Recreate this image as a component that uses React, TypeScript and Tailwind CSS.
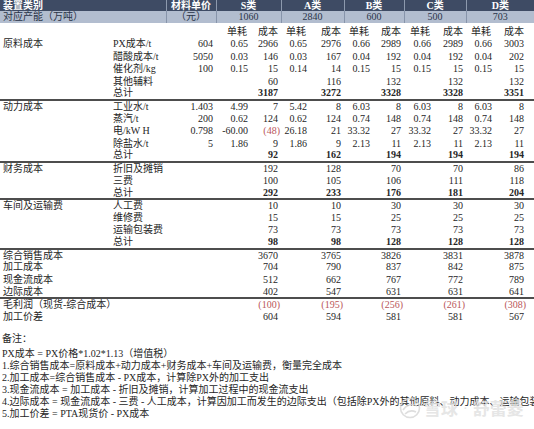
const colClass = [
  "w-[110px]",
  "w-[56px]",
  "w-[50px]",
  "w-[35px]",
  "w-[30px]",
  "w-[29px]",
  "w-[34px]",
  "w-[29px]",
  "w-[31px]",
  "w-[30px]",
  "w-[32px]",
  "w-[29px]",
  "w-[32px]",
  "w-[7px]",
];

interface Row {
  label?: string;
  sub?: string;
  unit?: string;
  vals: string[]; // S单耗, S成本, A单耗, A成本 ... D成本
  bold?: boolean;
  line?: boolean;
  red?: number[];
}

// only the 成本 columns filled
const cost = (a: string, b: string, c: string, d: string, e: string) => ["", a, "", b, "", c, "", d, "", e];

const rows: Row[] = [
  { label: "原料成本", sub: "PX成本/t", unit: "604", vals: ["0.65", "2966", "0.65", "2976", "0.66", "2989", "0.66", "2989", "0.66", "3003"] },
  { sub: "醋酸成本/t", unit: "5050", vals: ["0.03", "146", "0.03", "167", "0.04", "192", "0.04", "192", "0.04", "202"] },
  { sub: "催化剂/kg", unit: "100", vals: ["0.15", "15", "0.14", "14", "0.15", "15", "0.15", "15", "0.15", "15"] },
  { sub: "其他辅料", vals: cost("60", "116", "132", "132", "132") },
  { sub: "总计", vals: cost("3187", "3272", "3328", "3328", "3351"), bold: true, line: true },
  { label: "动力成本", sub: "工业水/t", unit: "1.403", vals: ["4.99", "7", "5.42", "8", "6.03", "8", "6.03", "8", "6.03", "8"] },
  { sub: "蒸汽/t", unit: "200", vals: ["0.62", "124", "0.62", "124", "0.74", "148", "0.74", "148", "0.74", "148"] },
  { sub: "电/kW H", unit: "0.798", vals: ["-60.00", "(48)", "26.18", "21", "33.32", "27", "33.32", "27", "33.32", "27"], red: [1] },
  { sub: "除盐水/t", unit: "5", vals: ["1.86", "9", "1.86", "9", "2.13", "11", "2.13", "11", "2.13", "11"] },
  { sub: "总计", vals: cost("92", "162", "194", "194", "194"), bold: true, line: true },
  { label: "财务成本", sub: "折旧及摊销", vals: cost("192", "128", "70", "70", "86") },
  { sub: "三费", vals: cost("100", "105", "106", "111", "118") },
  { sub: "总计", vals: cost("292", "233", "176", "181", "204"), bold: true, line: true },
  { label: "车间及运输费", sub: "人工费", vals: cost("10", "10", "30", "30", "30") },
  { sub: "维修费", vals: cost("15", "15", "25", "25", "25") },
  { sub: "运输包装费", vals: cost("73", "73", "73", "73", "73") },
  { sub: "总计", vals: cost("98", "98", "128", "128", "128"), bold: true, line: true },
  { label: "综合销售成本", vals: cost("3670", "3765", "3826", "3831", "3878") },
  { label: "加工成本", vals: cost("704", "790", "837", "842", "875") },
  { label: "现金流成本", vals: cost("512", "662", "767", "772", "789") },
  { label: "边际成本", vals: cost("402", "547", "631", "631", "641"), line: true },
  { label: "毛利润（现货-综合成本）", vals: cost("(100)", "(195)", "(256)", "(261)", "(308)"), red: [1, 3, 5, 7, 9] },
  { label: "加工价差", vals: cost("604", "594", "581", "581", "567") },
];

const notes = [
  "PX成本 = PX价格*1.02*1.13（增值税）",
  "1.综合销售成本=原料成本+动力成本+财务成本+车间及运输费，衡量完全成本",
  "2.加工成本=综合销售成本 - PX成本，计算除PX外的加工支出",
  "3.现金流成本 = 加工成本 - 折旧及摊销，计算加工过程中的现金流支出",
  "4.边际成本 = 现金流成本 - 三费 - 人工成本，计算因加工而发生的边际支出（包括除PX外的其他原料、动力成本、运输包装费）",
  "5.加工价差 = PTA现货价 - PX成本",
];

const classes = ["S", "A", "B", "C", "D"];
const capacity = ["1060", "2840", "600", "500", "703"];

export default function App() {
  return (
    <div className="relative w-[534px] h-[429px] overflow-hidden bg-white font-['Liberation_Serif','Noto_Sans_CJK_SC',serif] text-[10px] text-[#262626]">
      <table className="table-fixed border-collapse w-[534px] whitespace-nowrap leading-[10px]">
        <colgroup>
          {colClass.map((c, i) => (
            <col key={i} className={c} />
          ))}
        </colgroup>
        <tbody>
          <tr className="h-[11px] bg-[#3e4b64] text-white font-bold">
            <td colSpan={2} className="pl-[3px]">装置类别</td>
            <td className="text-center border-l border-[#8d99ad]">材料单价</td>
            {classes.map((c, i) => (
              <td key={c} colSpan={i === 4 ? 3 : 2} className="text-center border-l border-[#8d99ad]">
                {c}类
              </td>
            ))}
          </tr>
          <tr className="h-[12px] bg-[#b2bdcf] text-[#2a3448]">
            <td colSpan={2} className="pl-[3px]">对应产能（万吨）</td>
            <td className="text-center border-l border-[#8794aa]">（元）</td>
            {capacity.map((c, i) => (
              <td key={c} colSpan={i === 4 ? 3 : 2} className="text-center border-l border-[#8794aa]">
                {c}
              </td>
            ))}
          </tr>
          <tr className="h-[2.8px]">
            <td colSpan={14} />
          </tr>
          <tr className="h-[12.4px]">
            <td />
            <td />
            <td />
            {classes.map((c) => [
              <td key={c + "a"} className="text-right pr-[4px]">单耗</td>,
              <td key={c + "b"} className="text-right pr-[3px]">成本</td>,
            ])}
            <td />
          </tr>
          {rows.map((r, i) => (
            <tr key={i} className={`h-[12.4px] ${r.line ? "border-b-2 border-[#4d4d4d]" : ""}`}>
              <td className="pl-[3px]">{r.label}</td>
              <td className="pl-[3px]">{r.sub}</td>
              <td className="text-right pr-[3px]">{r.unit}</td>
              {r.vals.map((v, j) => (
                <td
                  key={j}
                  className={`text-right ${
                    r.red?.includes(j) ? "pr-[1px] text-[#b9565a]" : "pr-[3px]"
                  } ${r.bold ? "font-bold" : ""}`}
                >
                  {v}
                </td>
              ))}
              <td />
            </tr>
          ))}
        </tbody>
      </table>

      <div className="mt-[10px] pl-[2px] leading-[12px] whitespace-nowrap">
        <div>备注：</div>
        <div className="mt-[3px]">
          {notes.map((n) => (
            <div key={n}>{n}</div>
          ))}
        </div>
      </div>

      <div className="absolute left-[398px] top-[397px] flex items-center gap-[2px] text-[#e0e0e0] opacity-80">
        <svg width="24" height="22" viewBox="0 0 24 22" fill="none" stroke="#d6d6d6" strokeWidth="1.6">
          <circle cx="12" cy="11" r="9.5" />
          <path d="M5 13c3-5 9-7 14-4" />
          <path d="M7 17c3-3 7-4 11-2" />
        </svg>
        <span className="text-[17px] leading-[18px] font-bold font-['Noto_Sans_CJK_SC',sans-serif]">雪球</span>
        <span className="text-[14px] mx-[3px]">·</span>
        <span className="text-[17px] leading-[18px] font-bold font-['Noto_Sans_CJK_SC',sans-serif]">舒蕾菱</span>
      </div>
    </div>
  );
}
